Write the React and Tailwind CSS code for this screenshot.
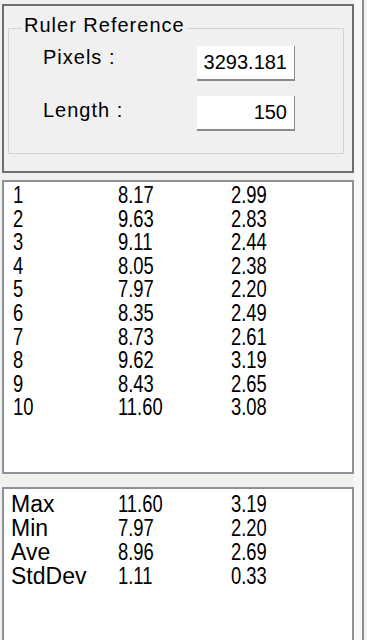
const rows = [
  ['1', '8.17', '2.99'],
  ['2', '9.63', '2.83'],
  ['3', '9.11', '2.44'],
  ['4', '8.05', '2.38'],
  ['5', '7.97', '2.20'],
  ['6', '8.35', '2.49'],
  ['7', '8.73', '2.61'],
  ['8', '9.62', '3.19'],
  ['9', '8.43', '2.65'],
  ['10', '11.60', '3.08'],
];

const stats = [
  ['Max', '11.60', '3.19'],
  ['Min', '7.97', '2.20'],
  ['Ave', '8.96', '2.69'],
  ['StdDev', '1.11', '0.33'],
];

function Narrow({ children }) {
  return <span className="inline-block origin-left scale-x-[0.8] whitespace-nowrap">{children}</span>;
}

function Field({ label, value, labelTop }) {
  return (
    <div className="flex items-start">
      <div className={`w-[188px] pl-[34px] text-[20px] leading-[20px] tracking-[1px] ${labelTop}`}>{label}</div>
      <div className="w-[98px] h-[35px] bg-white border-b-2 border-r border-[#8a8a8a] flex items-center justify-end pr-[7px] pb-[2px] text-[20px] leading-[20px]">
        {value}
      </div>
    </div>
  );
}

export default function App() {
  return (
    <div className="w-[367px] h-[640px] bg-[#f0f0f0] flex overflow-hidden text-black font-['Liberation_Sans',Arial,sans-serif]">
      <div className="w-[354px] pl-[2px] pt-[4px] flex flex-col">
        {/* Ruler reference panel */}
        <div className="h-[169px] border-2 border-[#6e6e6e] bg-[#f0f0f0] pl-[4px] pr-[8px] pt-[9px]">
          <fieldset className="border border-[#d3d3d3] h-[139px] px-0">
            <legend className="ml-[13px] px-[2px] pb-[7px] text-[20px] leading-[20px] tracking-[1px]">Ruler Reference</legend>
            <div className="mt-[4px] flex flex-col gap-[15px]">
              <Field label="Pixels :" value="3293.181" labelTop="mt-[1px]" />
              <Field label="Length :" value="150" labelTop="mt-[4px]" />
            </div>
          </fieldset>
        </div>

        {/* Measurement list */}
        <div className="mt-[7px] h-[294px] bg-white border-2 border-[#8d9198] pl-[9px] pt-[2px] text-[23px] leading-[23.6px]">
          {rows.map(([n, a, b]) => (
            <div key={n} className="grid grid-cols-[105px_113px_1fr]">
              <Narrow>{n}</Narrow>
              <Narrow>{a}</Narrow>
              <Narrow>{b}</Narrow>
            </div>
          ))}
        </div>

        {/* Summary */}
        <div className="mt-[13px] flex-1 bg-white border-2 border-b-0 border-[#8d9198] pl-[7px] pt-[3px] text-[23px] leading-[24px]">
          {stats.map(([n, a, b]) => (
            <div key={n} className="grid grid-cols-[107px_113px_1fr]">
              <span className="whitespace-nowrap">{n}</span>
              <Narrow>{a}</Narrow>
              <Narrow>{b}</Narrow>
            </div>
          ))}
        </div>
      </div>

      {/* Right edge of neighbouring window */}
      <div className="w-[8px] bg-[#f7f7f7]" />
      <div className="w-[2px] bg-[#8a8a8a]" />
      <div className="flex-1 bg-[#f3f3f3]" />
    </div>
  );
}
